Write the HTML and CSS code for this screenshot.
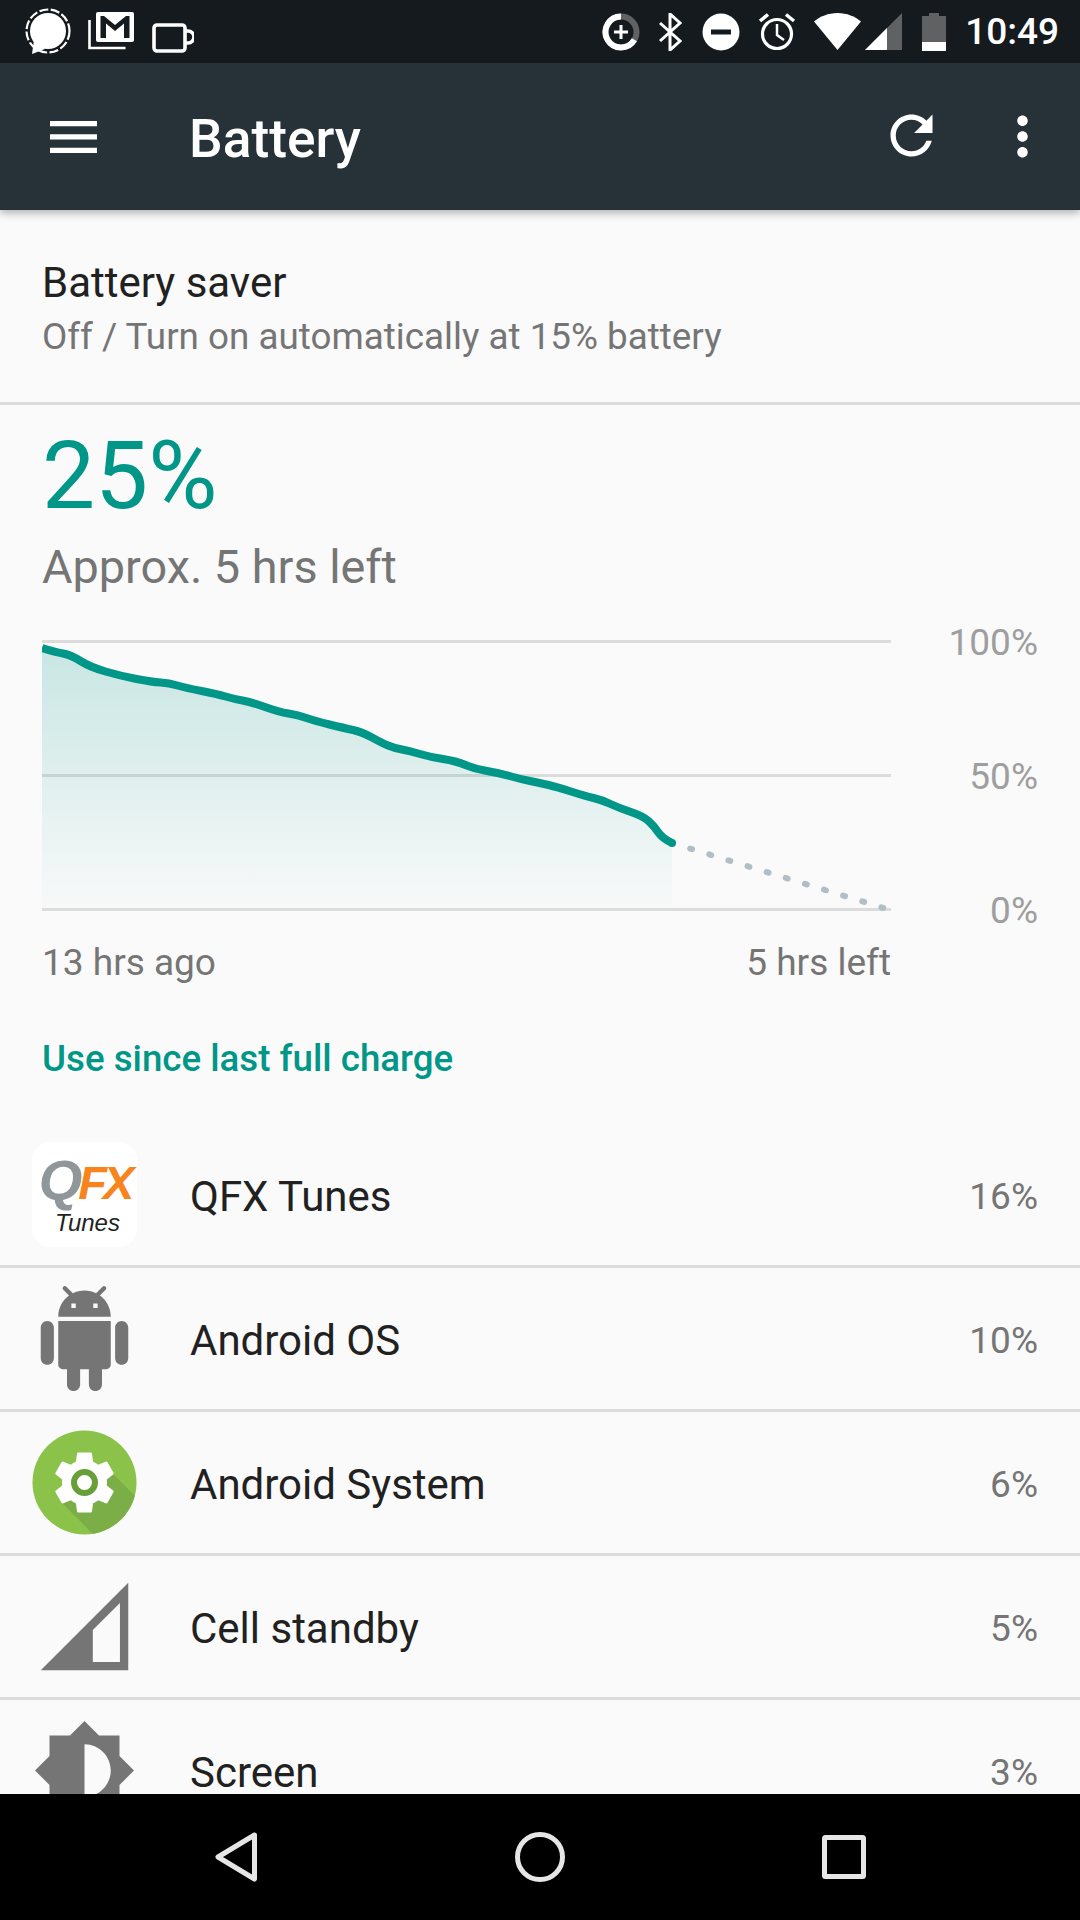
FILE: index.html
```html
<!DOCTYPE html>
<html lang="en">
<head>
    <meta charset="UTF-8">
    <meta name="viewport" content="width=device-width, initial-scale=1.0">
    <title>Battery</title>
    <link rel="stylesheet" href="styles.css">
</head>
<body>
    <div class="status-bar">
        <svg class="st-signal" viewBox="0 0 50 50" width="50" height="50">
            <circle cx="25" cy="24" r="21.5" fill="none" stroke="#fff" stroke-width="2.2" stroke-dasharray="9 2.5"/>
            <circle cx="25" cy="24" r="18" fill="#fff"/>
            <path d="M11 33L9 47l13-5z" fill="#fff"/>
        </svg>
        <svg class="st-gmail" viewBox="0 0 46 38" width="46" height="38">
            <path d="M1.5 8v28h36" fill="none" stroke="#fff" stroke-width="2.6"/>
            <rect x="8" y="0" width="38" height="30" rx="2" fill="#fff"/>
            <path d="M12.500 26V4h3.500l11 9 11-9h3.500v22h-5.500V11.500l-9 7.500-9-7.500V26z" fill="#141a1e"/>
        </svg>
        <svg class="st-cup" viewBox="0 0 42 30" width="42" height="30">
            <rect x="2" y="2" width="31" height="26" rx="3" fill="none" stroke="#fff" stroke-width="3.600"/>
            <path d="M34 8h2a5.200 5.200 0 0 1 0 12h-2" fill="none" stroke="#fff" stroke-width="3.600"/>
        </svg>
        <div class="status-right">
            <svg class="st-saver" viewBox="0 0 38 38" width="38" height="38">
                <circle cx="19" cy="19" r="15.500" fill="none" stroke="#5f6163" stroke-width="6"/>
                <path d="M19 3.500A15.500 15.500 0 1 0 32.400 26.800" fill="none" stroke="#fff" stroke-width="6"/>
                <path d="M12 19h14M19 12v14" stroke="#fff" stroke-width="3"/>
            </svg>
            <svg class="st-bt" viewBox="0 0 24 38" width="24" height="38">
                <path d="M2 10l20 18-10 9V1l10 9L2 28" fill="none" stroke="#fff" stroke-width="3"/>
            </svg>
            <svg class="st-dnd" viewBox="0 0 38 38" width="38" height="38">
                <circle cx="19" cy="19" r="18.500" fill="#fff"/>
                <rect x="9" y="16.500" width="20" height="5" fill="#141a1e"/>
            </svg>
            <svg class="st-alarm" viewBox="0 0 38 40" width="38" height="40">
                <circle cx="19" cy="22" r="14.500" fill="none" stroke="#fff" stroke-width="3.200"/>
                <path d="M19 12v11l7 5" fill="none" stroke="#fff" stroke-width="2.500"/>
                <path d="M2 9L10 2.500M36 9L28 2.500" stroke="#fff" stroke-width="3.500"/>
            </svg>
            <svg class="st-wifi" viewBox="0 0 47 37" width="47" height="37">
                <path d="M23.500 37L0 8.500C6 3.500 14 0 23.500 0S41 3.500 47 8.500z" fill="#fff"/>
            </svg>
            <svg class="st-cell" viewBox="0 0 37 37" width="37" height="37">
                <path d="M0 37L37 0v37z" fill="#5f6163"/>
                <path d="M0 37l22-22v22z" fill="#fff"/>
            </svg>
            <svg class="st-batt" viewBox="0 0 24 38" width="24" height="38">
                <path d="M0 3h7V0h10v3h7v35H0z" fill="#5f6163"/>
                <rect x="0" y="29" width="24" height="9" fill="#fff"/>
            </svg>
            <span class="clock">10:49</span>
        </div>
    </div>

    <header class="toolbar">
        <svg class="menu-icon" viewBox="0 0 47 32" width="47" height="32">
            <path d="M0 0h47v5.300H0zM0 13.300h47v5.300H0zM0 26.700h47V32H0z" fill="#fff"/>
        </svg>
        <h1>Battery</h1>
        <svg class="refresh-icon" viewBox="0 0 24 24" width="63" height="63">
            <path d="M17.650 6.350C16.200 4.900 14.210 4 12 4c-4.420 0-7.990 3.580-7.990 8s3.570 8 7.990 8c3.730 0 6.840-2.550 7.730-6h-2.080c-.820 2.330-3.040 4-5.650 4-3.310 0-6-2.690-6-6s2.690-6 6-6c1.660 0 3.140.690 4.220 1.780L13 11h7V4l-2.350 2.350z" fill="#fff"/>
        </svg>
        <svg class="more-icon" viewBox="0 0 24 24" width="63" height="63">
            <path d="M12 8c1.100 0 2-.900 2-2s-.900-2-2-2-2 .900-2 2 .900 2 2 2zm0 2c-1.100 0-2 .900-2 2s.900 2 2 2 2-.900 2-2-.900-2-2-2zm0 6c-1.100 0-2 .900-2 2s.900 2 2 2 2-.900 2-2-.900-2-2-2z" fill="#fff"/>
        </svg>
    </header>

    <main class="content">
        <section class="saver">
            <div class="saver-title">Battery saver</div>
            <div class="saver-sub">Off / Turn on automatically at 15% battery</div>
        </section>

        <section class="summary">
            <div class="percent">25%</div>
            <div class="left">Approx. 5 hrs left</div>

            <div class="chart">
                <svg class="chart-graph" viewBox="42 636 849 278" width="849" height="278">
                    <defs>
                        <linearGradient id="fade" x1="0" y1="0" x2="0" y2="1">
                            <stop offset="0" stop-color="#009688" stop-opacity="0.2"/>
                            <stop offset="1" stop-color="#009688" stop-opacity="0.01"/>
                        </linearGradient>
                    </defs>
                    <path d="M42 641.500H891M42 775.500H891M42 909.500H891" stroke="#dcdcdc" stroke-width="3" fill="none"/>
                    <path class="chart-fill" fill="url(#fade)" d="M42 648Q55 652 63 653.500Q71 655 80.500 661Q90 667 105.500 671.500Q121 676 136.500 679Q152 682 160.500 682.500Q169 683 177.500 685.500Q186 688 201.500 691Q217 694 225.500 696.500Q234 699 242.500 700.500Q251 702 265 707Q279 712 288.500 713.500Q298 715 306.500 718Q315 721 329.500 724.500Q344 728 353 730Q362 732 372 737.500Q382 743 388 745.500Q394 748 402 749.500Q410 751 420 754Q430 757 443 759Q456 761 465.500 765Q475 769 487 771Q499 773 509.500 776Q520 779 530 781Q540 783 548.500 785Q557 787 571 791.500Q585 796 593.500 798Q602 800 610.500 804Q619 808 631 812Q643 816 648.500 821Q654 826 658 832Q662 838 672 843V908H42z"/>
                    <path d="M672 843L887 909" stroke="#b0bec5" stroke-width="6" stroke-linecap="round" stroke-dasharray="2 18" stroke-dashoffset="1" fill="none"/>
                    <path d="M42 648Q55 652 63 653.500Q71 655 80.500 661Q90 667 105.500 671.500Q121 676 136.500 679Q152 682 160.500 682.500Q169 683 177.500 685.500Q186 688 201.500 691Q217 694 225.500 696.500Q234 699 242.500 700.500Q251 702 265 707Q279 712 288.500 713.500Q298 715 306.500 718Q315 721 329.500 724.500Q344 728 353 730Q362 732 372 737.500Q382 743 388 745.500Q394 748 402 749.500Q410 751 420 754Q430 757 443 759Q456 761 465.500 765Q475 769 487 771Q499 773 509.500 776Q520 779 530 781Q540 783 548.500 785Q557 787 571 791.500Q585 796 593.500 798Q602 800 610.500 804Q619 808 631 812Q643 816 648.500 821Q654 826 658 832Q662 838 672 843" stroke="#009688" stroke-width="8" stroke-linejoin="round" fill="none"/>
                    <circle cx="672" cy="843" r="4" fill="#009688"/>
                </svg>
                <div class="chart-labels">
                    <span>100%</span>
                    <span>50%</span>
                    <span>0%</span>
                </div>
            </div>
            <div class="chart-axis">
                <span>13 hrs ago</span>
                <span>5 hrs left</span>
            </div>
            <h2 class="use-title">Use since last full charge</h2>
        </section>

        <ul class="usage">
            <li class="usage-row">
                <div class="app-icon qfx-icon">
                    <div class="qfx-logo"><span class="q">Q</span><span class="fx">FX</span></div>
                    <div class="qfx-name">Tunes</div>
                </div>
                <span class="app-name">QFX Tunes</span>
                <span class="app-pct">16%</span>
            </li>
            <li class="usage-row">
                <svg class="app-icon" viewBox="0 0 24 24">
                    <path fill="#757575" d="M6 18c0 .550.450 1 1 1h1v3.500c0 .830.670 1.500 1.500 1.500s1.500-.670 1.500-1.500V19h2v3.500c0 .830.670 1.500 1.500 1.500s1.500-.670 1.500-1.500V19h1c.550 0 1-.450 1-1V8H6v10zM3.500 8C2.670 8 2 8.670 2 9.500v7c0 .830.670 1.500 1.500 1.500S5 17.330 5 16.500v-7C5 8.670 4.330 8 3.500 8zm17 0c-.830 0-1.500.670-1.500 1.500v7c0 .830.670 1.500 1.500 1.500s1.500-.670 1.500-1.500v-7c0-.830-.670-1.500-1.500-1.500zm-4.970-5.840l1.300-1.300c.200-.200.200-.510 0-.710-.200-.200-.510-.200-.710 0l-1.480 1.480C13.850 1.230 12.950 1 12 1c-.960 0-1.860.230-2.660.630L7.850.150c-.200-.200-.510-.200-.710 0-.200.200-.200.510 0 .710l1.310 1.310C6.970 3.260 6 5.010 6 7h12c0-1.990-.970-3.750-2.470-4.840zM10 5H9V4h1v1zm5 0h-1V4h1v1z"/>
                </svg>
                <span class="app-name">Android OS</span>
                <span class="app-pct">10%</span>
            </li>
            <li class="usage-row">
                <svg class="app-icon" viewBox="0 0 105 105">
                    <defs>
                        <clipPath id="disc"><circle cx="52.500" cy="52.500" r="52"/></clipPath>
                    </defs>
                    <circle cx="52.500" cy="52.500" r="52" fill="#8bc34a"/>
                    <path clip-path="url(#disc)" d="M31 74L81 44 125 88 90 125 61 104z" fill="#7cae48"/>
                    <g transform="translate(16.500 16.500) scale(3)">
                        <path fill="#fff" d="M19.430 12.980c.040-.320.070-.640.070-.980s-.030-.660-.070-.980l2.110-1.650c.190-.150.240-.420.120-.640l-2-3.460c-.120-.220-.390-.300-.610-.220l-2.490 1c-.520-.400-1.080-.730-1.690-.980l-.380-2.650C14.460 2.180 14.250 2 14 2h-4c-.250 0-.460.180-.490.420l-.380 2.650c-.610.250-1.170.590-1.690.980l-2.490-1c-.230-.090-.490 0-.610.220l-2 3.460c-.130.220-.070.490.120.640l2.110 1.650c-.040.320-.070.650-.070.980s.030.660.070.980l-2.110 1.650c-.190.150-.240.420-.120.640l2 3.460c.120.220.390.300.610.220l2.490-1c.520.400 1.080.730 1.690.980l.380 2.650c.030.240.240.420.490.420h4c.250 0 .460-.180.490-.420l.380-2.650c.610-.250 1.170-.590 1.690-.980l2.490 1c.230.090.490 0 .610-.220l2-3.460c.120-.220.070-.490-.120-.640l-2.110-1.650z"/>
                    </g>
                    <circle cx="52.500" cy="52.500" r="10.500" fill="#fff" stroke="#689f38" stroke-width="6"/>
                </svg>
                <span class="app-name">Android System</span>
                <span class="app-pct">6%</span>
            </li>
            <li class="usage-row">
                <svg class="app-icon" viewBox="0 0 24 24">
                    <path fill="#757575" fill-rule="evenodd" d="M2 22h20V2zM20.100 20.100h-6.200v-7.300l6.200-6.200z"/>
                </svg>
                <span class="app-name">Cell standby</span>
                <span class="app-pct">5%</span>
            </li>
            <li class="usage-row">
                <svg class="app-icon" viewBox="0 0 24 24">
                    <path fill="#757575" d="M20 15.310L23.310 12 20 8.690V4h-4.690L12 .690 8.690 4H4v4.690L.690 12 4 15.310V20h4.690L12 23.310 15.310 20H20v-4.690zM12 18V6c3.310 0 6 2.690 6 6s-2.690 6-6 6z"/>
                </svg>
                <span class="app-name">Screen</span>
                <span class="app-pct">3%</span>
            </li>
        </ul>
    </main>

    <nav class="nav-bar">
        <svg viewBox="0 0 43 50" width="43" height="50">
            <path d="M39.500 3L3 25l36.500 22z" fill="none" stroke="#e6e6e6" stroke-width="5" stroke-linejoin="round"/>
        </svg>
        <svg viewBox="0 0 50 50" width="50" height="50">
            <circle cx="25" cy="25" r="22.500" fill="none" stroke="#e6e6e6" stroke-width="5"/>
        </svg>
        <svg viewBox="0 0 44 44" width="44" height="44">
            <rect x="2.500" y="2.500" width="39" height="39" rx="1" fill="none" stroke="#e6e6e6" stroke-width="5"/>
        </svg>
    </nav>
</body>
</html>
```

FILE: styles.css
```css
* {
    box-sizing: border-box;
}
html, body {
    margin: 0;
    padding: 0;
    height: 1920px;
    overflow: hidden;
}
body {
    display: flex;
    flex-direction: column;
    font-family: Roboto, "Liberation Sans", sans-serif;
    background-color: #fafafa;
    color: #212121;
}
svg {
    display: block;
    flex-shrink: 0;
}

/* status bar */
.status-bar {
    height: 63px;
    flex-shrink: 0;
    display: flex;
    align-items: center;
    background-color: #141a1e;
    padding-left: 23px;
    color: #fff;
}
.st-signal {
    margin-top: 1px;
}
.st-gmail {
    margin-left: 15px;
    margin-top: -2px;
}
.st-cup {
    margin-left: 18px;
    margin-top: 13px;
}
.status-right {
    margin-left: auto;
    padding-right: 21px;
    display: flex;
    align-items: center;
}
.st-bt {
    margin-left: 18px;
}
.st-dnd {
    margin-left: 20px;
}
.st-alarm {
    margin-left: 18px;
}
.st-wifi {
    margin-left: 18px;
}
.st-cell {
    margin-left: 4px;
}
.st-batt {
    margin-left: 20px;
}
.clock {
    margin-left: 19px;
    font-size: 37px;
    font-weight: 500;
}

/* toolbar */
.toolbar {
    height: 147px;
    flex-shrink: 0;
    display: flex;
    align-items: center;
    background-color: #263238;
    box-shadow: 0 3px 8px rgba(0,0,0,0.3);
    color: #fff;
}
.menu-icon {
    margin-left: 50px;
}
.toolbar h1 {
    margin: 5px 0 0 92px;
    font-size: 53.3px;
    font-weight: 500;
    flex: 1;
}
.refresh-icon {
    margin-right: 48px;
    margin-top: -2px;
}
.more-icon {
    margin-right: 26px;
}

/* page */
.content {
    flex: 1;
    min-height: 0;
    overflow: hidden;
}
.saver {
    height: 195px;
    padding: 50px 42px 0;
    border-bottom: 3px solid #dcdcdc;
}
.saver-title {
    font-size: 42px;
    line-height: 46px;
}
.saver-sub {
    margin-top: 7px;
    font-size: 36.8px;
    line-height: 48px;
    color: #757575;
}
.summary {
    padding: 0 42px;
}
.percent {
    margin-top: 16px;
    font-size: 94.5px;
    line-height: 110px;
    color: #009688;
}
.left {
    margin-top: 10px;
    font-size: 46.8px;
    line-height: 52px;
    color: #757575;
}
.chart {
    margin-top: 43px;
    display: flex;
    justify-content: space-between;
}
.chart-labels {
    display: flex;
    flex-direction: column;
    justify-content: space-between;
    align-items: flex-end;
    margin-top: -13px;
    height: 308px;
    font-size: 37px;
    line-height: 40px;
    color: #9e9e9e;
}
.chart-axis {
    width: 849px;
    margin-top: 10px;
    display: flex;
    justify-content: space-between;
    font-size: 37px;
    line-height: 44px;
    color: #757575;
}
.use-title {
    margin: 52px 0 0;
    font-size: 36.7px;
    line-height: 44px;
    font-weight: 500;
    color: #009688;
}

/* usage list */
.usage {
    list-style: none;
    margin: 43px 0 0;
    padding: 0;
}
.usage-row {
    height: 144px;
    display: flex;
    align-items: center;
    padding: 0 42px 0 32px;
    border-bottom: 3px solid #dcdcdc;
}
.app-icon {
    width: 105px;
    height: 105px;
    flex-shrink: 0;
}
.app-name {
    margin-left: 53px;
    padding-top: 4px;
    flex: 1;
    font-size: 42px;
}
.app-pct {
    padding-top: 4px;
    font-size: 37px;
    color: #757575;
}
.qfx-icon {
    background-color: #fff;
    border-radius: 18px;
    display: flex;
    flex-direction: column;
    align-items: center;
    font-family: "Liberation Sans", sans-serif;
    font-style: italic;
    font-weight: 700;
    padding-top: 15px;
}
.qfx-logo {
    font-size: 47px;
    line-height: 46px;
    letter-spacing: -4px;
}
.q {
    font-size: 56px;
    color: #8f979b;
}
.fx {
    color: #f7841c;
}
.qfx-name {
    margin: 3px 0 0 6px;
    font-size: 24px;
    line-height: 28px;
    font-weight: 400;
    color: #222;
}

/* nav bar */
.nav-bar {
    height: 126px;
    flex-shrink: 0;
    background-color: #000;
    display: flex;
    align-items: center;
    padding-left: 215px;
}
.nav-bar svg:nth-child(2) {
    margin-left: 257px;
}
.nav-bar svg:nth-child(3) {
    margin-left: 257px;
}
```
